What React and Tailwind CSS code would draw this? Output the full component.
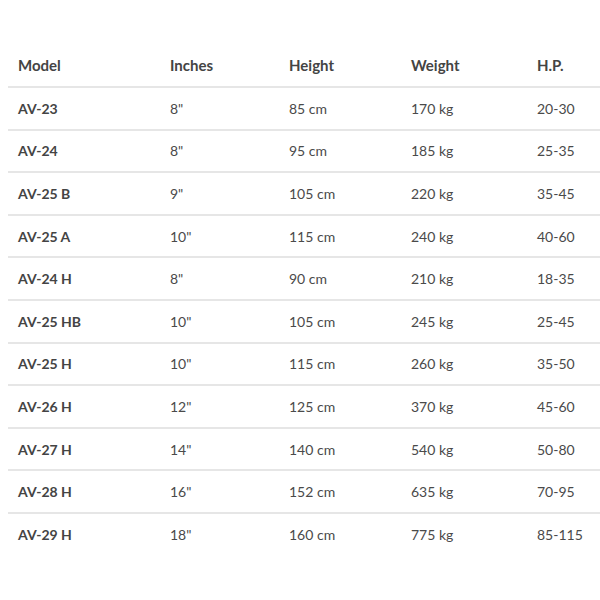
export default function App() {
  const rows = [
    ["AV-23", "8\"", "85 cm", "170 kg", "20-30"],
    ["AV-24", "8\"", "95 cm", "185 kg", "25-35"],
    ["AV-25 B", "9\"", "105 cm", "220 kg", "35-45"],
    ["AV-25 A", "10\"", "115 cm", "240 kg", "40-60"],
    ["AV-24 H", "8\"", "90 cm", "210 kg", "18-35"],
    ["AV-25 HB", "10\"", "105 cm", "245 kg", "25-45"],
    ["AV-25 H", "10\"", "115 cm", "260 kg", "35-50"],
    ["AV-26 H", "12\"", "125 cm", "370 kg", "45-60"],
    ["AV-27 H", "14\"", "140 cm", "540 kg", "50-80"],
    ["AV-28 H", "16\"", "152 cm", "635 kg", "70-95"],
    ["AV-29 H", "18\"", "160 cm", "775 kg", "85-115"],
  ];
  const head = ["Model", "Inches", "Height", "Weight", "H.P."];
  return (
    <div className="w-[600px] h-[600px] bg-white pt-[44px] pl-[8px]" style={{ fontFamily: "Lato, 'Open Sans', sans-serif" }}>
      <table className="w-[592px] border-collapse text-[14px] text-[#4a4a4a]">
        <colgroup>
          <col className="w-[152px]" />
          <col className="w-[119px]" />
          <col className="w-[122px]" />
          <col className="w-[126px]" />
          <col className="w-[73px]" />
        </colgroup>
        <thead>
          <tr className="h-[43px] border-b-2 border-[#e6e6e6]">
            {head.map((h) => (
              <th key={h} className="text-left font-bold pl-[10px] p-0 text-[15px] text-[#444]">{h}</th>
            ))}
          </tr>
        </thead>
        <tbody>
          {rows.map((r, i) => (
            <tr key={i} className={"h-[42.6px] " + (i < rows.length - 1 ? "border-b-2 border-[#e6e6e6]" : "")}>
              {r.map((c, j) => (
                <td key={j} className={"pl-[10px] p-0 " + (j === 0 ? "font-bold text-[#444]" : "")}>{c}</td>
              ))}
            </tr>
          ))}
        </tbody>
      </table>
    </div>
  );
}
